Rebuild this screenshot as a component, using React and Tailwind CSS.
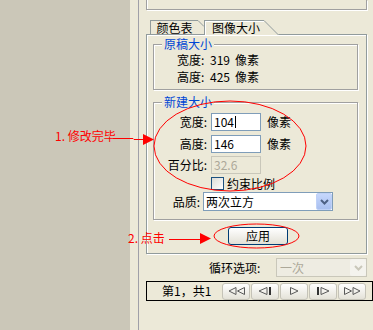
import React from "react";

const FONT = "font-['Noto_Sans_CJK_SC','Noto_Sans',sans-serif]";

function Group({ label, className = "", children }) {
  return (
    <div
      className={`relative ml-[6px] w-[205px] border border-[#a0a0a0] shadow-[inset_1px_1px_0_#ffffff,1px_1px_0_#ffffff] ${className}`}
    >
      <span className="absolute left-[8px] top-[-8px] bg-[#ece9d8] px-[2px] leading-[14px] text-[#0046d5]">
        {label}
      </span>
      {children}
    </div>
  );
}

function Chevron({ color }) {
  return (
    <svg width="9" height="6" viewBox="0 0 9 6">
      <path d="M1 1 L4.5 4.5 L8 1" fill="none" stroke={color} strokeWidth="2" />
    </svg>
  );
}

function NavIcon({ kind }) {
  const c = "#5a5a5a";
  const b = "#333333";
  if (kind === "first")
    return (
      <svg width="17" height="8" viewBox="0 0 17 8">
        <path d="M8 0.5 L1 4 L8 7.5 Z" fill="none" stroke={c} />
        <path d="M16.5 0.5 L9.5 4 L16.5 7.5 Z" fill="none" stroke={c} />
      </svg>
    );
  if (kind === "prev")
    return (
      <svg width="14" height="8" viewBox="0 0 14 8">
        <path d="M9 0.5 L1 4 L9 7.5 Z" fill="none" stroke={c} />
        <rect x="11" y="0" width="2" height="8" fill={b} />
      </svg>
    );
  if (kind === "play")
    return (
      <svg width="9" height="8" viewBox="0 0 9 8">
        <path d="M0.5 0.5 L8 4 L0.5 7.5 Z" fill="none" stroke={c} />
      </svg>
    );
  if (kind === "next")
    return (
      <svg width="14" height="8" viewBox="0 0 14 8">
        <rect x="1" y="0" width="2" height="8" fill={b} />
        <path d="M5 0.5 L13 4 L5 7.5 Z" fill="none" stroke={c} />
      </svg>
    );
  return (
    <svg width="17" height="8" viewBox="0 0 17 8">
      <path d="M0.5 0.5 L7.5 4 L0.5 7.5 Z" fill="none" stroke={c} />
      <path d="M9 0.5 L16 4 L9 7.5 Z" fill="none" stroke={c} />
    </svg>
  );
}

function NavButton({ kind }) {
  return (
    <div className="flex h-[17px] w-[28px] items-center justify-center rounded-[3px] border border-[#c5c3b8] bg-gradient-to-b from-[#ffffff] to-[#e4e2d8]">
      <NavIcon kind={kind} />
    </div>
  );
}

export default function App() {
  return (
    <div
      className={`relative flex h-[330px] w-[373px] overflow-hidden bg-[#ece9d8] text-[12px] leading-[14px] text-black ${FONT}`}
    >
      <div className="w-[130px] shrink-0 bg-[#cbc7b8]" />
      <div className="w-[8px] shrink-0" />
      <div className="w-px shrink-0 bg-[#a0a0a8]" />

      <div className="flex w-[234px] shrink-0 flex-col pl-[7px]">
        {/* top box */}
        <div className="h-[10px] w-[221px] border-x border-b border-[#a0a0a0] shadow-[inset_1px_0_0_#ffffff,1px_1px_0_#ffffff]" />

        {/* tabs */}
        <div className="mt-[10px] flex h-[14px] items-start pl-[4px]">
          <div className="flex">
            <div className="h-[14px] w-[48px] border-l border-t border-[#919b9c] text-center leading-[14px]">
              颜色表
            </div>
            <svg width="6" height="14" viewBox="0 0 6 14" className="block">
              <path d="M0 0.5 L6 6.5" stroke="#919b9c" fill="none" />
            </svg>
          </div>
          <div className="relative z-10 flex">
            <div className="h-[15px] w-[60px] border-l border-t border-[#919b9c] bg-[#ece9d8] pl-[7px] leading-[14px] shadow-[inset_1px_1px_0_#ffffff]">
              图像大小
            </div>
            <svg width="15" height="15" viewBox="0 0 15 15" className="block">
              <path d="M0 0 L15 15 L0 15 Z" fill="#ece9d8" />
              <path d="M0 0.5 L14.5 15" stroke="#919b9c" fill="none" />
            </svg>
          </div>
        </div>

        {/* panel */}
        <div className="flex h-[220px] w-[221px] flex-col border border-[#919b9c] shadow-[inset_1px_1px_0_#ffffff,1px_1px_0_#ffffff]">
          <Group label="原稿大小" className="mt-[9px] h-[46px]">
            <div className="flex flex-col pl-[23px] pt-[6px] leading-[17px]">
              <div className="flex">
                <span className="w-[33px]">宽度:</span>
                <span className="w-[25px]">319</span>
                <span>像素</span>
              </div>
              <div className="flex">
                <span className="w-[33px]">高度:</span>
                <span className="w-[25px]">425</span>
                <span>像素</span>
              </div>
            </div>
          </Group>

          <Group label="新建大小" className="mt-[12px] h-[118px]">
            <div className="flex flex-col">
              <div className="mt-[10px] flex h-[18px] items-center">
                <span className="w-[57px] pr-[4px] text-right">宽度:</span>
                <div className="flex h-[18px] w-[50px] items-center border border-[#7f9db9] bg-white px-[2px]">
                  104
                  <span className="ml-[1px] inline-block h-[12px] w-px bg-black" />
                </div>
                <span className="ml-[6px]">像素</span>
              </div>
              <div className="mt-[4px] flex h-[18px] items-center">
                <span className="w-[57px] pr-[4px] text-right">高度:</span>
                <div className="flex h-[18px] w-[50px] items-center border border-[#7f9db9] bg-white px-[2px]">
                  146
                </div>
                <span className="ml-[6px]">像素</span>
              </div>
              <div className="mt-[3px] flex h-[18px] items-center">
                <span className="w-[57px] pr-[4px] text-right">百分比:</span>
                <div className="flex h-[18px] w-[50px] items-center border border-[#c9c7ba] bg-[#ece9d8] px-[2px] text-[#aca899]">
                  32.6
                </div>
              </div>
              <div className="mt-[3px] flex h-[13px] items-center pl-[57px]">
                <div className="h-[13px] w-[13px] border border-[#1c5180] bg-gradient-to-br from-[#dcdcd7] to-white" />
                <span className="ml-[3px]">约束比例</span>
              </div>
              <div className="mt-[2px] flex h-[19px] items-center">
                <span className="w-[49px] pr-[3px] text-right">品质:</span>
                <div className="flex h-[19px] w-[130px] items-center border border-[#7f9db9] bg-white">
                  <span className="flex-1 pl-[2px]">两次立方</span>
                  <div className="flex h-[17px] w-[16px] items-center justify-center rounded-[2px] border border-[#bfd1f7] bg-gradient-to-b from-[#c6d7fc] to-[#a9c0f0]">
                    <Chevron color="#4d6185" />
                  </div>
                </div>
              </div>
            </div>
          </Group>

          <div className="ml-[81px] mt-[7px] flex h-[18px] w-[60px] items-center justify-center rounded-[3px] border border-[#003c74] bg-gradient-to-b from-[#ffffff] to-[#e3e1d6]">
            应用
          </div>
        </div>

        {/* loop options */}
        <div className="mt-[4px] flex h-[19px] items-center">
          <span className="ml-[63px] w-[67px]">循环选项:</span>
          <div className="flex h-[19px] w-[91px] items-center border border-[#c9c7ba] bg-[#eeece2]">
            <span className="flex-1 pl-[3px] text-[#aca899]">一次</span>
            <div className="flex h-[17px] w-[16px] items-center justify-center rounded-[2px] bg-[#f4f3ee]">
              <Chevron color="#c9c7ba" />
            </div>
          </div>
        </div>

        {/* frame bar */}
        <div className="mt-[4px] flex h-[20px] w-[227px] items-center border border-black">
          <span className="w-[75px] pl-[15px]">第1，共1</span>
          <div className="flex gap-[1px]">
            <NavButton kind="first" />
            <NavButton kind="prev" />
            <NavButton kind="play" />
            <NavButton kind="next" />
            <NavButton kind="last" />
          </div>
        </div>
      </div>

      {/* annotations */}
      <svg
        className="pointer-events-none absolute left-0 top-0"
        width="373"
        height="330"
        viewBox="0 0 373 330"
      >
        <ellipse cx="230" cy="146" rx="76" ry="45" fill="none" stroke="#ff0000" strokeWidth="1" />
        <ellipse cx="256.5" cy="236" rx="42.5" ry="12" fill="none" stroke="#ff0000" strokeWidth="1" />
        <polyline points="113,138.5 133,138.5 134,139.5 145,139.5" fill="none" stroke="#ff0000" strokeWidth="1" />
        <polygon points="143,134 154,139.5 143,145" fill="#ff0000" />
        <line x1="169" y1="239.5" x2="202" y2="239.5" stroke="#ff0000" strokeWidth="1" />
        <polygon points="200,233 211,238.5 200,244" fill="#ff0000" />
      </svg>
      <span className="absolute left-[55px] top-[129px] leading-[14px] text-[#ff0000]">1. 修改完毕</span>
      <span className="absolute left-[128px] top-[231px] leading-[14px] text-[#ff0000]">2. 点击</span>
    </div>
  );
}
